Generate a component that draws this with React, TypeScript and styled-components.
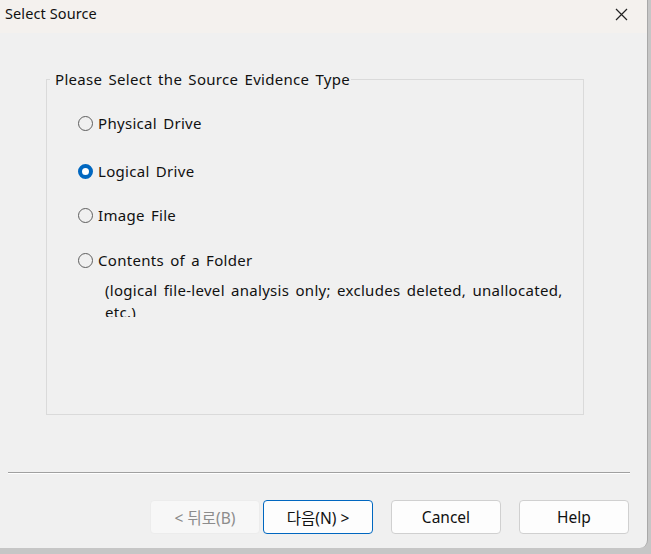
import styled, { createGlobalStyle } from "styled-components";

const GlobalStyle = createGlobalStyle`
  html, body {
    margin: 0;
    padding: 0;
    background: #c6c6c6;
  }
  body {
    font-family: "Noto Sans", "Noto Sans CJK KR", sans-serif;
  }
`;

const uiFont = `"Noto Sans", "Noto Sans CJK KR", sans-serif`;

const Screen = styled.div`
  width: 651px;
  height: 554px;
  overflow: hidden;
  background: #c6c6c6;
`;

const Window = styled.div`
  width: 647px;
  height: 548px;
  background: #f0f0f0;
  border-right: 1px solid #a8a8a8;
  border-bottom-right-radius: 8px;
  display: flex;
  flex-direction: column;
  overflow: hidden;
`;

const TitleBar = styled.div`
  height: 33px;
  box-sizing: border-box;
  background: #f4f1ee;
  display: flex;
  align-items: flex-start;
  justify-content: space-between;
  padding: 3px 19px 0 5px;
  font-family: ${uiFont};
  font-size: 14.5px;
  letter-spacing: 0.1px;
  color: #111;
  svg {
    margin-top: 5px;
  }
`;

const CloseIcon = () => (
  <svg width="13" height="13" viewBox="0 0 13 13">
    <path d="M1 1 L12 12 M12 1 L1 12" stroke="#222" strokeWidth="1.2" fill="none" />
  </svg>
);

const Body = styled.div`
  flex: 1;
  display: flex;
  flex-direction: column;
  padding: 36px 0 0 46px;
`;

const GroupBox = styled.fieldset`
  margin: 0;
  width: 538px;
  height: 346px;
  box-sizing: border-box;
  border: 1px solid #dadada;
  padding: 22px 0 0 30px;
  font-family: ${uiFont};
  font-size: 15px;
  letter-spacing: 0.3px;
  word-spacing: 2px;
  color: #111;
`;

const Legend = styled.legend`
  margin-left: -27px;
  padding: 0 1px 0 5px;
  font-size: 15px;
  color: #111;
`;

const OptionList = styled.div`
  display: flex;
  flex-direction: column;
`;

const Option = styled.label<{ $gap: number }>`
  display: flex;
  align-items: center;
  gap: 5px;
  height: 24px;
  margin-top: ${(p) => p.$gap}px;
  cursor: default;
`;

const RadioCircle = styled.span<{ $checked?: boolean }>`
  width: 15px;
  height: 15px;
  margin-left: 1px;
  box-sizing: border-box;
  border-radius: 50%;
  flex-shrink: 0;
  border: ${(p) => (p.$checked ? "4px solid #0067c0" : "1px solid #5e5e5e")};
  background: ${(p) => (p.$checked ? "#ffffff" : "transparent")};
`;

/* the dialog clips the second line of the note, as the original does */
const Note = styled.div`
  margin: 7px 0 0 28px;
  width: 468px;
  height: 38px;
  overflow: hidden;
  line-height: 22px;
`;

const Separator = styled.div`
  margin: 57px 0 0 -38px;
  width: 622px;
  height: 1px;
  background: #a0a0a0;
  border-bottom: 1px solid #ffffff;
`;

const ButtonRow = styled.div`
  display: flex;
  margin: 26px 0 0 104px;
`;

const Button = styled.button<{ $primary?: boolean; $space?: number }>`
  width: 110px;
  height: 34px;
  margin-left: ${(p) => p.$space ?? 0}px;
  box-sizing: border-box;
  border-radius: 4px;
  font-family: ${uiFont};
  font-size: 15.5px;
  color: #111;
  background: #fdfdfd;
  border: 1px solid ${(p) => (p.$primary ? "#0067c0" : "#d0d0d0")};
  &:disabled {
    background: #f7f7f7;
    border-color: #ececec;
    color: #8c8c8c;
  }
`;

const options = [
  { label: "Physical Drive", gap: 0 },
  { label: "Logical Drive", gap: 24, checked: true },
  { label: "Image File", gap: 20 },
  { label: "Contents of a Folder", gap: 21 },
];

export default function App() {
  return (
    <Screen>
      <GlobalStyle />
      <Window>
        <TitleBar>
          <span>Select Source</span>
          <CloseIcon />
        </TitleBar>
        <Body>
          <GroupBox>
            <Legend>Please Select the Source Evidence Type</Legend>
            <OptionList>
              {options.map((o) => (
                <Option key={o.label} $gap={o.gap}>
                  <RadioCircle $checked={o.checked} />
                  {o.label}
                </Option>
              ))}
              <Note>
                (logical file-level analysis only; excludes deleted, unallocated, etc.)
              </Note>
            </OptionList>
          </GroupBox>
          <Separator />
          <ButtonRow>
            <Button disabled>&lt; 뒤로(B)</Button>
            <Button $primary $space={3}>다음(N) &gt;</Button>
            <Button $space={18}>Cancel</Button>
            <Button $space={18}>Help</Button>
          </ButtonRow>
        </Body>
      </Window>
    </Screen>
  );
}
